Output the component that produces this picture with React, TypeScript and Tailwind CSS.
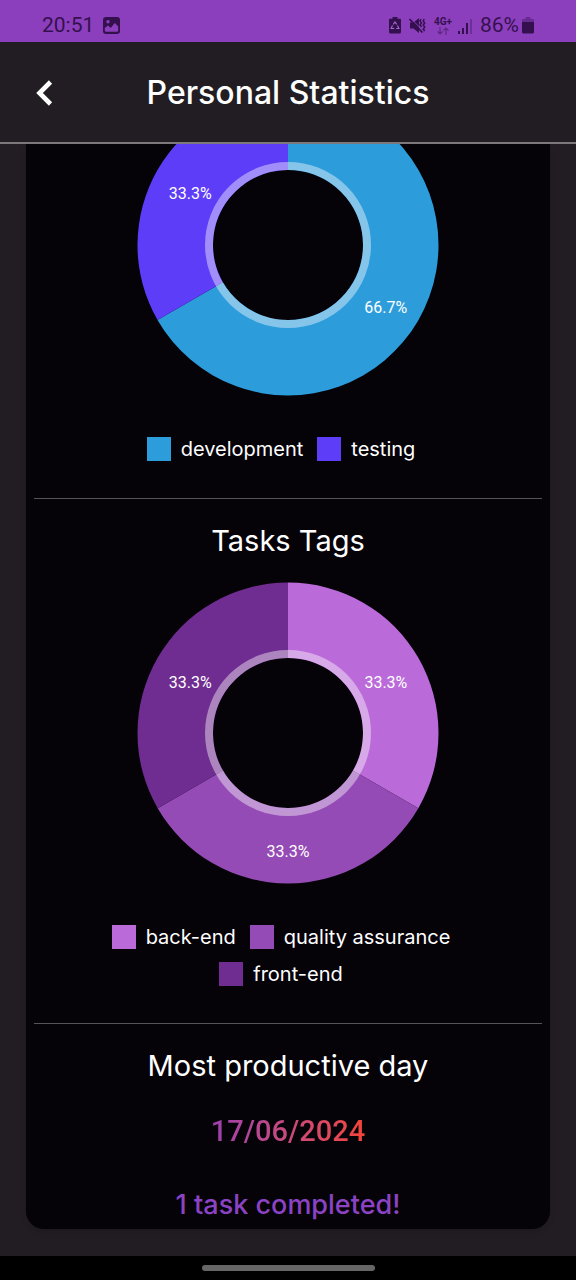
import React from "react";

type Slice = { label: string; value: number; color: string };

const typeSlices: Slice[] = [
  { label: "development", value: 66.7, color: "#2d9cdb" },
  { label: "testing", value: 33.3, color: "#5d3df8" },
];

const tagSlices: Slice[] = [
  { label: "back-end", value: 33.3, color: "#bb6bd9" },
  { label: "quality assurance", value: 33.3, color: "#954bb5" },
  { label: "front-end", value: 33.3, color: "#702d91" },
];

function point(angle: number, radius: number) {
  return [Math.sin(angle) * radius, -Math.cos(angle) * radius];
}

function slicePath(from: number, to: number, outer: number, inner: number) {
  const [ax, ay] = point(from, outer);
  const [bx, by] = point(to, outer);
  const [cx, cy] = point(to, inner);
  const [dx, dy] = point(from, inner);
  const large = to - from > Math.PI ? 1 : 0;
  return `M${ax} ${ay}A${outer} ${outer} 0 ${large} 1 ${bx} ${by}L${cx} ${cy}A${inner} ${inner} 0 ${large} 0 ${dx} ${dy}Z`;
}

function Donut({ slices, name }: { slices: Slice[]; name: string }) {
  const total = slices.reduce((sum, s) => sum + s.value, 0);
  let start = 0;
  const arcs = slices.map((s) => {
    const from = start;
    start += (s.value / total) * Math.PI * 2;
    return { ...s, from, to: start, mid: (from + start) / 2 };
  });
  return (
    <svg viewBox="-151 -151 302 302" className="w-[302px] shrink-0" role="img" aria-label={name}>
      {arcs.map((a) => (
        <path key={a.label} d={slicePath(a.from, a.to, 150.5, 75)} fill={a.color} />
      ))}
      <circle r="79" fill="none" stroke="#fff" strokeOpacity="0.42" strokeWidth="8" />
      {arcs.map((a) => {
        const [x, y] = point(a.mid, 113);
        return (
          <text
            key={a.label}
            x={x}
            y={y + 11}
            textAnchor="middle"
            className="fill-white font-['Roboto',sans-serif] text-[16px]"
          >
            {a.value}%
          </text>
        );
      })}
    </svg>
  );
}

function Legend({ slices }: { slices: Slice[] }) {
  return (
    <ul className="flex flex-wrap justify-center gap-y-[13px] px-12">
      {slices.map((s) => (
        <li key={s.label} className="mr-[14px] flex h-6 items-center gap-[10px] text-[20px] leading-6">
          <span className="size-6" style={{ backgroundColor: s.color }} />
          {s.label}
        </li>
      ))}
    </ul>
  );
}

function StatusBar() {
  return (
    <div className="flex h-[42px] items-center justify-between bg-[#8b3fbc] pt-[9px] pr-[42px] pl-[42px] font-['Roboto',sans-serif] text-[21px] text-[#35104f]">
      <div className="flex items-center gap-[9px]">
        <span>20:51</span>
        <svg viewBox="0 0 17 17" className="size-[17px]" aria-hidden="true">
          <path
            fillRule="evenodd"
            fill="currentColor"
            d="M3 0h11a3 3 0 0 1 3 3v11a3 3 0 0 1-3 3H3a3 3 0 0 1-3-3V3a3 3 0 0 1 3-3ZM1.8 13.2a1.5 1.5 0 0 0 1.5 1.6h10.4a1.5 1.5 0 0 0 1.5-1.6V9.5L11.8 6 7.7 11 5 8.4 1.8 11ZM5 3a1.7 1.7 0 1 0 0 3.4A1.7 1.7 0 0 0 5 3Z"
          />
        </svg>
      </div>
      <div className="flex items-center">
        <svg viewBox="0 0 12 17" className="mr-2 h-[17px] w-3" aria-hidden="true">
          <path fill="currentColor" d="M3.5 0h5v1.8H11a1 1 0 0 1 1 1V15a1.6 1.6 0 0 1-1.6 1.6H1.6A1.6 1.6 0 0 1 0 15V2.8a1 1 0 0 1 1-1h2.5Z" />
          <path fill="none" stroke="#a66acb" strokeWidth="1.1" d="M4.3 7.4 6 5l1.7 2.4M8.5 8.5l1.4 3H7.2M5.2 11.5H2.1l1.4-3" />
        </svg>
        <svg viewBox="0 0 17 17" className="mr-2 size-[17px]" aria-hidden="true">
          <path fill="currentColor" d="M1 5.5h3.5L10 1v15l-5.5-4.5H1Z" />
          <path fill="none" stroke="#8b3fbc" strokeWidth="1" d="M1.5 1.2 14.5 14" />
          <path fill="none" stroke="currentColor" strokeWidth="1.8" d="M.5 2 13.5 15.5" />
          <path fill="none" stroke="currentColor" strokeWidth="1.5" d="M12 2l-1 2 1.500 2-1.500 2 1.500 2M15.200 2l-1 2 1.500 2-1.500 2 1.500 2-1.500 2 1.500 2" />
        </svg>
        <span className="mr-[6px] flex flex-col items-center">
          <span className="text-[10px] leading-[10px] font-bold">4G+</span>
          <svg viewBox="0 0 14 8" className="h-2 w-[14px] opacity-50" aria-hidden="true">
            <path fill="none" stroke="currentColor" strokeWidth="1.2" d="M4 0v7M1.5 4.5 4 7l2.500-2.500M10 8V1M7.500 3.500 10 1l2.500 2.500" />
          </svg>
        </span>
        <svg viewBox="0 0 15 16" className="mr-[7px] h-4 w-[15px]" aria-hidden="true">
          <path fill="currentColor" d="M0 13h2v3H0zM4 10h2v6H4zM8 5h2v11H8z" />
          <path fill="currentColor" fillOpacity="0.35" d="M12 1h2v15h-2z" />
        </svg>
        <span className="mr-[3px]">86%</span>
        <svg viewBox="0 0 12 17" className="h-[17px] w-3" aria-hidden="true">
          <path fill="currentColor" fillOpacity="0.4" d="M3.5 0h5v2H11a1 1 0 0 1 1 1v2H0V3a1 1 0 0 1 1-1h2.5Z" />
          <path fill="currentColor" d="M0 5h12v10a1.5 1.5 0 0 1-1.5 1.5h-9A1.5 1.5 0 0 1 0 15Z" />
        </svg>
      </div>
    </div>
  );
}

export default function App() {
  return (
    <div className="flex min-h-screen flex-col bg-[#221d22] font-['Inter',sans-serif] text-white">
      <StatusBar />
      <header className="grid h-[102px] grid-cols-[1fr_auto_1fr] items-center border-b-2 border-[#7b777b] pt-[2px]">
        <button type="button" aria-label="Back" className="ml-[34px] flex size-5 items-center justify-center">
          <svg viewBox="0 0 20 26" className="h-[26px] w-5 shrink-0" aria-hidden="true">
            <path fill="none" stroke="currentColor" strokeWidth="4.6" d="M16.500 2 5.500 13l11 11" />
          </svg>
        </button>
        <h1 className="text-[32px] font-medium">Personal Statistics</h1>
      </header>

      <main className="flex-1 overflow-hidden px-[26px] pb-[26px]">
        <div className="flex flex-col rounded-b-[18px] bg-[#050208] px-2 pb-2 text-center shadow-md">
          <section className="-mt-[50px] flex flex-col items-center pb-[37px]">
            <Donut slices={typeSlices} name="Tasks types" />
            <div className="mt-[41px] w-full">
              <Legend slices={typeSlices} />
            </div>
          </section>

          <section className="flex flex-col items-center border-t border-[#555258] pt-[22px] pb-[37px]">
            <h2 className="text-[29px] leading-10">Tasks Tags</h2>
            <div className="mt-[21px]">
              <Donut slices={tagSlices} name="Tasks tags" />
            </div>
            <div className="mt-[41px] w-full">
              <Legend slices={tagSlices} />
            </div>
          </section>

          <section className="border-t border-[#555258] pt-[22px]">
            <h2 className="text-[29px] leading-10">Most productive day</h2>
            <p className="mx-auto mt-[25px] w-fit bg-linear-to-r from-[#9f3fae] to-[#f44336] bg-clip-text font-['Roboto',sans-serif] text-[29px] leading-10 font-medium text-transparent">
              17/06/2024
            </p>
            <p className="mt-[38px] text-[27px] leading-8 font-medium text-[#8b43c4]">1 task completed!</p>
          </section>
        </div>
      </main>

      <footer className="flex h-6 items-center justify-center bg-black">
        <div className="h-[6px] w-[173px] rounded-full bg-[#666]" />
      </footer>
    </div>
  );
}
